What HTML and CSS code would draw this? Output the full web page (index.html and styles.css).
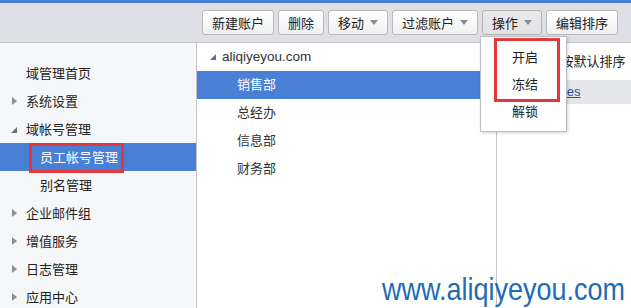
FILE: index.html
```html
<!DOCTYPE html>
<html lang="zh-CN">
<head>
    <meta charset="UTF-8">
    <meta name="viewport" content="width=device-width, initial-scale=1.0">
    <title>域帐号管理 - 员工帐号管理</title>
    <link rel="stylesheet" href="styles.css">
</head>
<body>

<div class="topbar"></div>

<div class="toolbar">
    <button class="btn">新建账户</button>
    <button class="btn">删除</button>
    <button class="btn">移动<span class="caret"></span></button>
    <button class="btn">过滤账户<span class="caret"></span></button>
    <button class="btn active">操作<span class="caret"></span></button>
    <button class="btn">编辑排序</button>
</div>

<div class="main">
    <aside class="sidebar">
        <ul class="nav">
            <li class="nav-item">域管理首页</li>
            <li class="nav-item"><span class="arrow closed"></span>系统设置</li>
            <li class="nav-item"><span class="arrow open"></span>域帐号管理</li>
            <li class="nav-item sub selected">员工帐号管理</li>
            <li class="nav-item sub">别名管理</li>
            <li class="nav-item"><span class="arrow closed"></span>企业邮件组</li>
            <li class="nav-item"><span class="arrow closed"></span>增值服务</li>
            <li class="nav-item"><span class="arrow closed"></span>日志管理</li>
            <li class="nav-item"><span class="arrow closed"></span>应用中心</li>
        </ul>
    </aside>

    <section class="tree">
        <div class="tree-row root"><span class="arrow open"></span>aliqiyeyou.com</div>
        <div class="tree-row dept selected">销售部</div>
        <div class="tree-row dept">总经办</div>
        <div class="tree-row dept">信息部</div>
        <div class="tree-row dept">财务部</div>
    </section>

    <section class="detail">
        <div class="detail-head">排列方式 按默认排序</div>
        <div class="detail-row"><a href="#">Sales</a></div>
    </section>
</div>

<!-- 操作 dropdown, opened -->
<ul class="dropdown">
    <li>开启</li>
    <li>冻结</li>
    <li>解锁</li>
</ul>

<div class="mark mark-nav"></div>
<div class="mark mark-menu"></div>

<div class="watermark">www.aliqiyeyou.com</div>

</body>
</html>
```

FILE: styles.css
```css
body {
    font-family: "Liberation Sans", "Noto Sans CJK SC", sans-serif;
    font-size: 13px;
    color: #222;
    margin: 0;
    padding: 0;
    width: 631px;
    height: 308px;
    overflow: hidden;
    position: relative;
    background-color: #fff;
}
ul {
    list-style: none;
    margin: 0;
    padding: 0;
}
.topbar {
    height: 3px;
    background-color: #4a7fd6;
}
.toolbar {
    height: 40px;
    box-sizing: border-box;
    padding: 7px 13px 0 0;
    display: flex;
    justify-content: flex-end;
    align-items: flex-start;
    gap: 4px;
    background-color: #dfe0e5;
    border-bottom: 1px solid #bfc1c7;
}
.btn {
    height: 25px;
    padding: 0 9px;
    display: flex;
    align-items: center;
    font-family: inherit;
    font-size: 13px;
    color: #222;
    border: 1px solid #b8b9bd;
    border-radius: 3px;
    background: linear-gradient(#ffffff, #f0f0f2);
    cursor: pointer;
}
.btn.active {
    background: linear-gradient(#e9e9eb, #e2e2e5);
    border-color: #b0b1b5;
}
.caret {
    width: 0;
    height: 0;
    margin-left: 6px;
    border-left: 4px solid transparent;
    border-right: 4px solid transparent;
    border-top: 5px solid #8a8b90;
}
.main {
    display: flex;
    height: 265px;
}
.sidebar {
    width: 196px;
    padding-top: 16px;
    background-color: #f6f7f9;
    border-right: 1px solid #c3c5ca;
}
.nav-item {
    height: 28px;
    line-height: 29px;
    padding-left: 26px;
    position: relative;
    color: #222;
}
.nav-item.sub {
    padding-left: 40px;
}
.nav-item.selected {
    background-color: #4a7fd6;
    color: #fff;
}
.arrow {
    position: absolute;
    width: 0;
    height: 0;
}
.arrow.closed {
    left: 12px;
    top: 10px;
    border-top: 4px solid transparent;
    border-bottom: 4px solid transparent;
    border-left: 5px solid #8c8d92;
}
.arrow.open {
    left: 11px;
    top: 12px;
    border-left: 6px solid transparent;
    border-bottom: 6px solid #6f7075;
}
.tree {
    width: 299px;
    border-right: 1px solid #c3c5ca;
}
.tree-row {
    height: 28px;
    line-height: 28px;
    position: relative;
    color: #333;
}
.tree-row.root {
    padding-left: 25px;
    font-size: 13.5px;
}
.tree-row.root .arrow.open {
    left: 13px;
    top: 11px;
}
.tree-row.dept {
    padding-left: 40px;
}
.tree-row.selected {
    background-color: #4a7fd6;
    color: #fff;
}
.detail {
    flex: 1;
}
.detail-head {
    height: 37px;
    line-height: 37px;
    padding-left: 8px;
    white-space: nowrap;
    color: #222;
}
.detail-row {
    height: 24px;
    line-height: 24px;
    padding-left: 51px;
    background-color: #e4e6ea;
}
.detail-row a {
    color: #1d4fa8;
    text-decoration: underline;
}
.dropdown {
    position: absolute;
    left: 480px;
    top: 36px;
    width: 85px;
    padding: 7px 0 6px;
    background-color: #fff;
    border: 1px solid #bdbdc2;
    box-shadow: 1px 1px 3px rgba(0, 0, 0, 0.18);
}
.dropdown li {
    height: 27px;
    line-height: 27px;
    padding-left: 31px;
    color: #222;
}
.mark {
    position: absolute;
    border: 3px solid #e2383c;
    box-sizing: border-box;
}
.mark-nav {
    left: 29px;
    top: 143px;
    width: 95px;
    height: 30px;
}
.mark-menu {
    left: 494px;
    top: 38px;
    width: 66px;
    height: 64px;
}
.watermark {
    position: absolute;
    left: 382px;
    top: 276px;
    font-family: "Liberation Sans", Arial, sans-serif;
    font-size: 27px;
    line-height: 32px;
    color: #1c6cb6;
    transform: scaleY(1.15);
    transform-origin: left bottom;
    white-space: nowrap;
}
```
